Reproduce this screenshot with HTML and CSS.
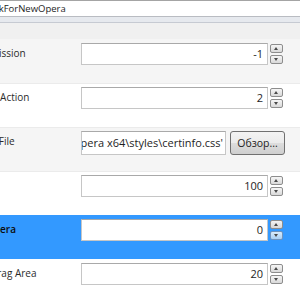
FILE: index.html
```html
<!DOCTYPE html>
<html lang="en">
<head>
  <meta charset="UTF-8">
  <title>Opera Settings</title>
  <link rel="stylesheet" href="styles.css">
</head>
<body>
  <div class="panel">
    <div class="title-field"><span>CheckForNewOpera</span></div>
    <div class="title-rule"></div>
    <div class="band"></div>

    <div class="row alt">
      <div class="label">Permission</div>
      <div class="field">
        <div class="box num">-1</div>
        <div class="spin"><span class="up"></span><span class="down"></span></div>
      </div>
    </div>

    <div class="row">
      <div class="label">Drop Action</div>
      <div class="field">
        <div class="box num">2</div>
        <div class="spin"><span class="up"></span><span class="down"></span></div>
      </div>
    </div>

    <div class="row alt">
      <div class="label">Style File</div>
      <div class="field">
        <div class="box path"><span>C:\Program Files\Opera x64\styles\certinfo.css'</span></div>
        <button class="browse" type="button">Обзор...</button>
      </div>
    </div>

    <div class="row">
      <div class="label"></div>
      <div class="field">
        <div class="box num">100</div>
        <div class="spin"><span class="up"></span><span class="down"></span></div>
      </div>
    </div>

    <div class="row selected">
      <div class="label">In Opera</div>
      <div class="field">
        <div class="box num">0</div>
        <div class="spin"><span class="up"></span><span class="down"></span></div>
      </div>
    </div>

    <div class="row">
      <div class="label">Up Drag Area</div>
      <div class="field">
        <div class="box num">20</div>
        <div class="spin"><span class="up"></span><span class="down"></span></div>
      </div>
    </div>
  </div>
</body>
</html>
```

FILE: styles.css
```css
body { margin: 0; overflow: hidden; background: #fff; font-family: "Open Sans", "Liberation Sans", sans-serif; font-size: 10px; color: #2b2b2b; }
.panel { width: 330px; margin-left: -26px; }

.title-field { height: 15px; border-top: 1px solid #a4a4a4; border-bottom: 1px solid #b9bcc2; background: #fff; padding-left: 3px; font-size: 9.5px; line-height: 15px; white-space: nowrap; color: #1e1e1e; }
.title-rule { height: 5px; background: #e6e9ee; border-bottom: 1px solid #c6cad2; }
.band { height: 16px; background: #f0f0f0; }

.row { display: flex; height: 44px; background: #fff; }
.row.alt { background: #f5f5f5; }
.row.selected { background: #3399ff; }
.row + .row { box-shadow: inset 0 1px 0 #ebebeb; }
.row.selected, .row.selected + .row { box-shadow: none; }

.label { width: 107px; padding-top: 7px; line-height: 14px; white-space: nowrap; overflow: hidden; }
.row.selected .label { color: #0d0d0d; font-weight: 600; }

.field { display: flex; gap: 2px; margin-top: 4px; }
.box { height: 20px; border: 1px solid #c6c6c6; border-top-color: #a9a9a9; background: #fff; line-height: 20px; font-size: 11px; color: #1e1e1e; }
.num { width: 181px; padding-right: 4px; text-align: right; }

.spin { display: flex; flex-direction: column; gap: 2px; margin-top: 1px; }
.spin span { display: block; width: 11px; height: 7px; border: 1px solid #8d8d8d; border-radius: 2px; background: linear-gradient(#f6f6f6, #d9d9d9); position: relative; }
.spin span::after { content: ""; position: absolute; left: 3px; top: 2px; border-left: 2.5px solid transparent; border-right: 2.5px solid transparent; }
.spin .up::after { border-bottom: 3px solid #4a4a4a; }
.spin .down::after { border-top: 3px solid #4a4a4a; }
.row.selected .spin .up { background: linear-gradient(#f3f3f3, #d6d6d6); }
.row.selected .spin .down { border-color: #6f93bd; background: linear-gradient(#d9ebfb, #a9d0f5); }

.path { width: 139px; height: 22px; padding: 0 2px; display: flex; justify-content: flex-end; overflow: hidden; white-space: nowrap; line-height: 22px; }
.browse { margin-left: 2px; width: 55px; height: 24px; border: 1px solid #707070; border-radius: 3px; background: linear-gradient(#f3f3f3 0%, #ebebeb 50%, #dddddd 51%, #cfcfcf 100%); font-family: "Open Sans", "Liberation Sans", sans-serif; font-size: 10.5px; color: #1e1e1e; padding: 0; }
```
